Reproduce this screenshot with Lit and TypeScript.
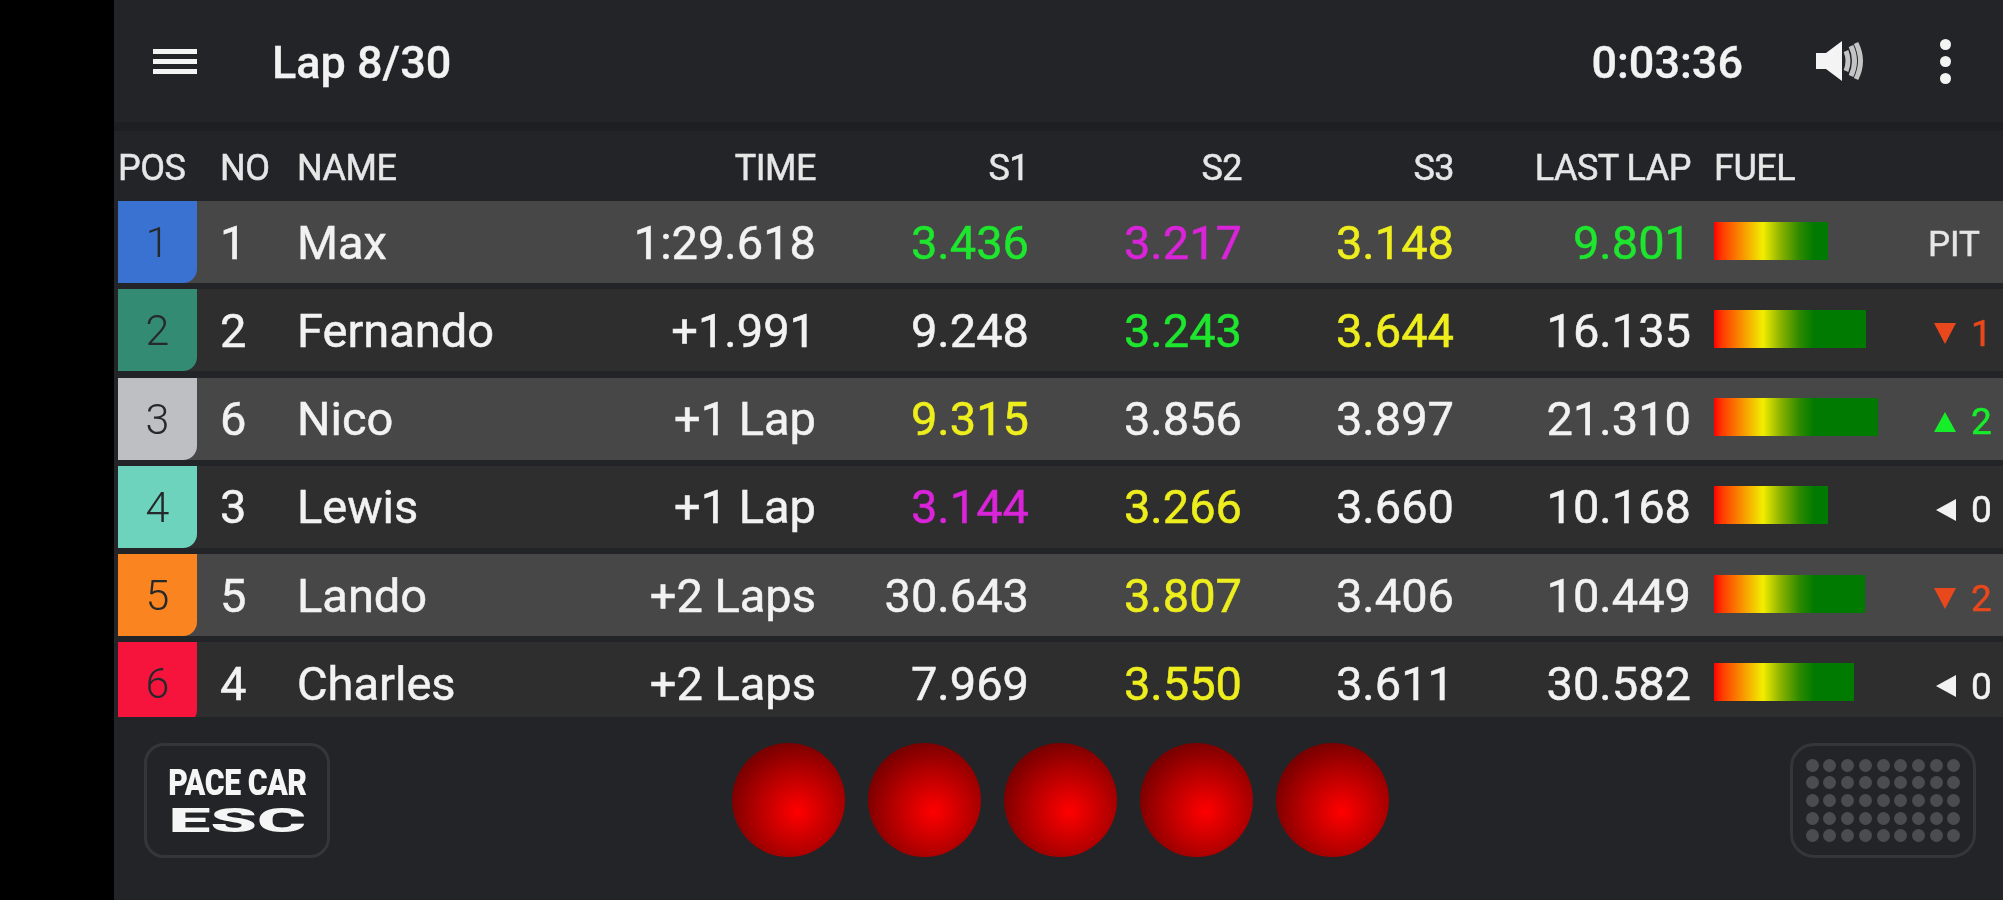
import { LitElement, html, css, svg } from "lit";
import { customElement } from "lit/decorators.js";

type Tone = "" | "g" | "m" | "y";
interface Cell { v: string; t?: Tone }
interface Row {
  pos: number; color: string; no: number; name: string; time: string;
  s1: Cell; s2: Cell; s3: Cell; last: Cell; fuel: number;
  delta: { kind: "pit" | "down" | "up" | "same"; n?: number };
}

const rows: Row[] = [
  { pos: 1, color: "#3a72d2", no: 1, name: "Max", time: "1:29.618", s1: { v: "3.436", t: "g" }, s2: { v: "3.217", t: "m" }, s3: { v: "3.148", t: "y" }, last: { v: "9.801", t: "g" }, fuel: 114, delta: { kind: "pit" } },
  { pos: 2, color: "#348b74", no: 2, name: "Fernando", time: "+1.991", s1: { v: "9.248" }, s2: { v: "3.243", t: "g" }, s3: { v: "3.644", t: "y" }, last: { v: "16.135" }, fuel: 152, delta: { kind: "down", n: 1 } },
  { pos: 3, color: "#bdbfc2", no: 6, name: "Nico", time: "+1 Lap", s1: { v: "9.315", t: "y" }, s2: { v: "3.856" }, s3: { v: "3.897" }, last: { v: "21.310" }, fuel: 164, delta: { kind: "up", n: 2 } },
  { pos: 4, color: "#6dd3bd", no: 3, name: "Lewis", time: "+1 Lap", s1: { v: "3.144", t: "m" }, s2: { v: "3.266", t: "y" }, s3: { v: "3.660" }, last: { v: "10.168" }, fuel: 114, delta: { kind: "same", n: 0 } },
  { pos: 5, color: "#fa8520", no: 5, name: "Lando", time: "+2 Laps", s1: { v: "30.643" }, s2: { v: "3.807", t: "y" }, s3: { v: "3.406" }, last: { v: "10.449" }, fuel: 151, delta: { kind: "down", n: 2 } },
  { pos: 6, color: "#f7143c", no: 4, name: "Charles", time: "+2 Laps", s1: { v: "7.969" }, s2: { v: "3.550", t: "y" }, s3: { v: "3.611" }, last: { v: "30.582" }, fuel: 140, delta: { kind: "same", n: 0 } },
];

const headers = ["POS", "NO", "NAME", "TIME", "S1", "S2", "S3", "LAST LAP", "FUEL", ""];

@customElement("app-root")
export class AppRoot extends LitElement {
  static styles = css`
    :host { display: block; width: 2003px; height: 900px; overflow: hidden; font-family: Roboto, "Liberation Sans", sans-serif; color: #f2f2f2; }
    .screen { display: flex; height: 900px; background: #000; }
    .app { margin-left: 114px; flex: 1; min-width: 0; display: flex; flex-direction: column; background: #222428; filter: blur(0.6px); }
    .top { height: 122px; flex: none; display: flex; align-items: center; font-weight: 500; font-size: 45px; padding-top: 2px; box-sizing: border-box; -webkit-text-stroke: 0.3px currentColor; }
    .menu { margin-left: 39px; width: 44px; display: flex; flex-direction: column; gap: 5px; margin-top: -2px; }
    .menu i { display: block; height: 5px; background: #f4f4f4; }
    .lap { margin-left: 75px; }
    .clock { margin-left: auto; }
    .speaker { margin-left: 72px; width: 52px; height: 42px; display: block; margin-top: -2px; }
    .more { margin-left: 73px; margin-right: 52px; display: flex; flex-direction: column; gap: 6px; margin-top: -2px; }
    .more i { display: block; width: 11px; height: 11px; border-radius: 50%; background: #f4f4f4; }
    .strip { height: 9px; flex: none; background: #1e1f22; }
    .grid { display: grid; grid-template-columns: 79px 100px 202px 317px 213px 213px 212px 237px 208px 1fr; align-items: center; padding-left: 4px; }
    .head { height: 70px; flex: none; font-size: 36px; color: #e6e6e6; letter-spacing: -0.5px; -webkit-text-stroke: 0.5px #e6e6e6; padding-top: 3px; box-sizing: border-box; }
    .head .pos { padding-left: 0; text-align: left; }
    .body { height: 516px; flex: none; overflow: hidden; display: flex; flex-direction: column; gap: 6.3px; }
    .row { height: 82px; flex: none; font-size: 47px; font-weight: 400; -webkit-text-stroke: 0.5px currentColor; }
    .bgwrap { margin-left: 4px; }
    .bgwrap.light { background: #474747; }
    .bgwrap.dark { background: #2e2e2e; }
    .row.grid { padding-left: 0; }
    .cellpos { height: 82px; display: flex; align-items: center; justify-content: center; color: #26292c; font-weight: 300; font-size: 43px; border-bottom-right-radius: 14px; -webkit-text-stroke: 0; }
    .no { padding-left: 23px; }
    .hno { padding-left: 23px; }
    .r { text-align: right; }
    .g { color: #1ee62e; }
    .m { color: #d924d9; }
    .y { color: #eeee1e; }
    .fuelcell { padding-left: 23px; }
    .fuel { height: 38px; margin-top: -3px; background: linear-gradient(90deg, #ff0000 0, #ff3a00 8px, #f2ee00 49px, #8fb400 66px, #2f8a00 85px, #007a00 100px); background-size: 164px 100%; background-repeat: no-repeat; }
    .delta { display: flex; align-items: center; font-size: 37px; padding-top: 6px; }
    .delta svg { display: block; flex: none; margin-left: 34px; width: 24px; height: 24px; }
    .delta b { font-weight: 400; margin-left: 14px; }
    .delta.down { color: #e8481c; }
    .delta.up { color: #16ee2a; }
    .delta.same { color: #f2f2f2; }
    .pit { font-size: 35px; padding: 4px 0 0 29px; color: #e6e6e6; }
    .foot { flex: 1; display: flex; align-items: flex-start; padding: 26px 0 0 30px; }
    .pace { box-sizing: border-box; width: 186px; height: 115px; border: 3px solid #34363a; border-radius: 20px; display: flex; flex-direction: column; align-items: center; justify-content: center; font-weight: 900; color: #f5f5f5; line-height: 1; }
    .pace .a { font-size: 36px; transform: scaleX(0.84); white-space: nowrap; height: 36px; letter-spacing: -0.5px; margin-bottom: 2px; }
    .pace .b { font-size: 34px; transform: scaleX(2.2); height: 34px; }
    .lights { margin-left: 402px; display: flex; gap: 23px; }
    .light-dot { width: 113px; height: 114px; border-radius: 50%; background: radial-gradient(circle at 58% 60%, #ff0000 0, #dc0000 20%, #b00000 45%, #7c0000 72%, #640000 100%); }
    .keys { margin-left: auto; margin-right: 27px; box-sizing: border-box; width: 186px; height: 115px; border: 3px solid #34363a; border-radius: 24px; display: grid; grid-template-columns: repeat(9, 13px); grid-auto-rows: 13px; gap: 4.7px; justify-content: center; align-content: center; }
    .keys i { display: block; border-radius: 50%; background: #4b4c4e; }
  `;

  private triangle(kind: string) {
    if (kind === "down") return html`<svg viewBox="0 0 24 24"><polygon points="1,2 23,2 12,23" fill="currentColor"></polygon></svg>`;
    if (kind === "up") return html`<svg viewBox="0 0 24 24"><polygon points="1,22 23,22 12,2" fill="currentColor"></polygon></svg>`;
    return html`<svg viewBox="0 0 24 24"><polygon points="23,1 23,23 3,12" fill="currentColor"></polygon></svg>`;
  }

  private cell(c: Cell) {
    return html`<div class="r ${c.t ?? ""}">${c.v}</div>`;
  }

  render() {
    return html`
      <div class="screen">
        <div class="app">
          <div class="top">
            <div class="menu"><i></i><i></i><i></i></div>
            <div class="lap">Lap 8/30</div>
            <div class="clock">0:03:36</div>
            <svg class="speaker" viewBox="0 0 52 42">
              <polygon points="1,13 11,13 27,1 27,41 11,29 1,29" fill="#f4f4f4"></polygon>
              ${svg`<path d="M31 11 Q35 21 31 31 M36 6 Q43 21 36 36 M41 3 Q50 21 41 39" fill="none" stroke="#c4c4c4" stroke-width="5"></path>`}
            </svg>
            <div class="more"><i></i><i></i><i></i></div>
          </div>
          <div class="strip"></div>
          <div class="grid head">
            ${headers.map((h, i) => html`<div class="${i === 0 ? "pos" : i === 1 ? "hno" : i >= 3 && i <= 7 ? "r" : i === 8 ? "fuelcell" : ""}">${h}</div>`)}
          </div>
          <div class="body">
            ${rows.map((r, i) => html`
              <div class="bgwrap ${i % 2 === 0 ? "light" : "dark"} grid row">
                <div class="cellpos" style="background:${r.color}">${r.pos}</div>
                <div class="no">${r.no}</div>
                <div>${r.name}</div>
                <div class="r">${r.time}</div>
                ${this.cell(r.s1)}${this.cell(r.s2)}${this.cell(r.s3)}${this.cell(r.last)}
                <div class="fuelcell"><div class="fuel" style="width:${r.fuel}px"></div></div>
                ${r.delta.kind === "pit"
                  ? html`<div class="pit">PIT</div>`
                  : html`<div class="delta ${r.delta.kind}">${this.triangle(r.delta.kind)}<b>${r.delta.n}</b></div>`}
              </div>`)}
          </div>
          <div class="foot">
            <div class="pace"><span class="a">PACE CAR</span><span class="b">ESC</span></div>
            <div class="lights">${[0, 1, 2, 3, 4].map(() => html`<div class="light-dot"></div>`)}</div>
            <div class="keys">${Array.from({ length: 45 }, () => html`<i></i>`)}</div>
          </div>
        </div>
      </div>
    `;
  }
}
